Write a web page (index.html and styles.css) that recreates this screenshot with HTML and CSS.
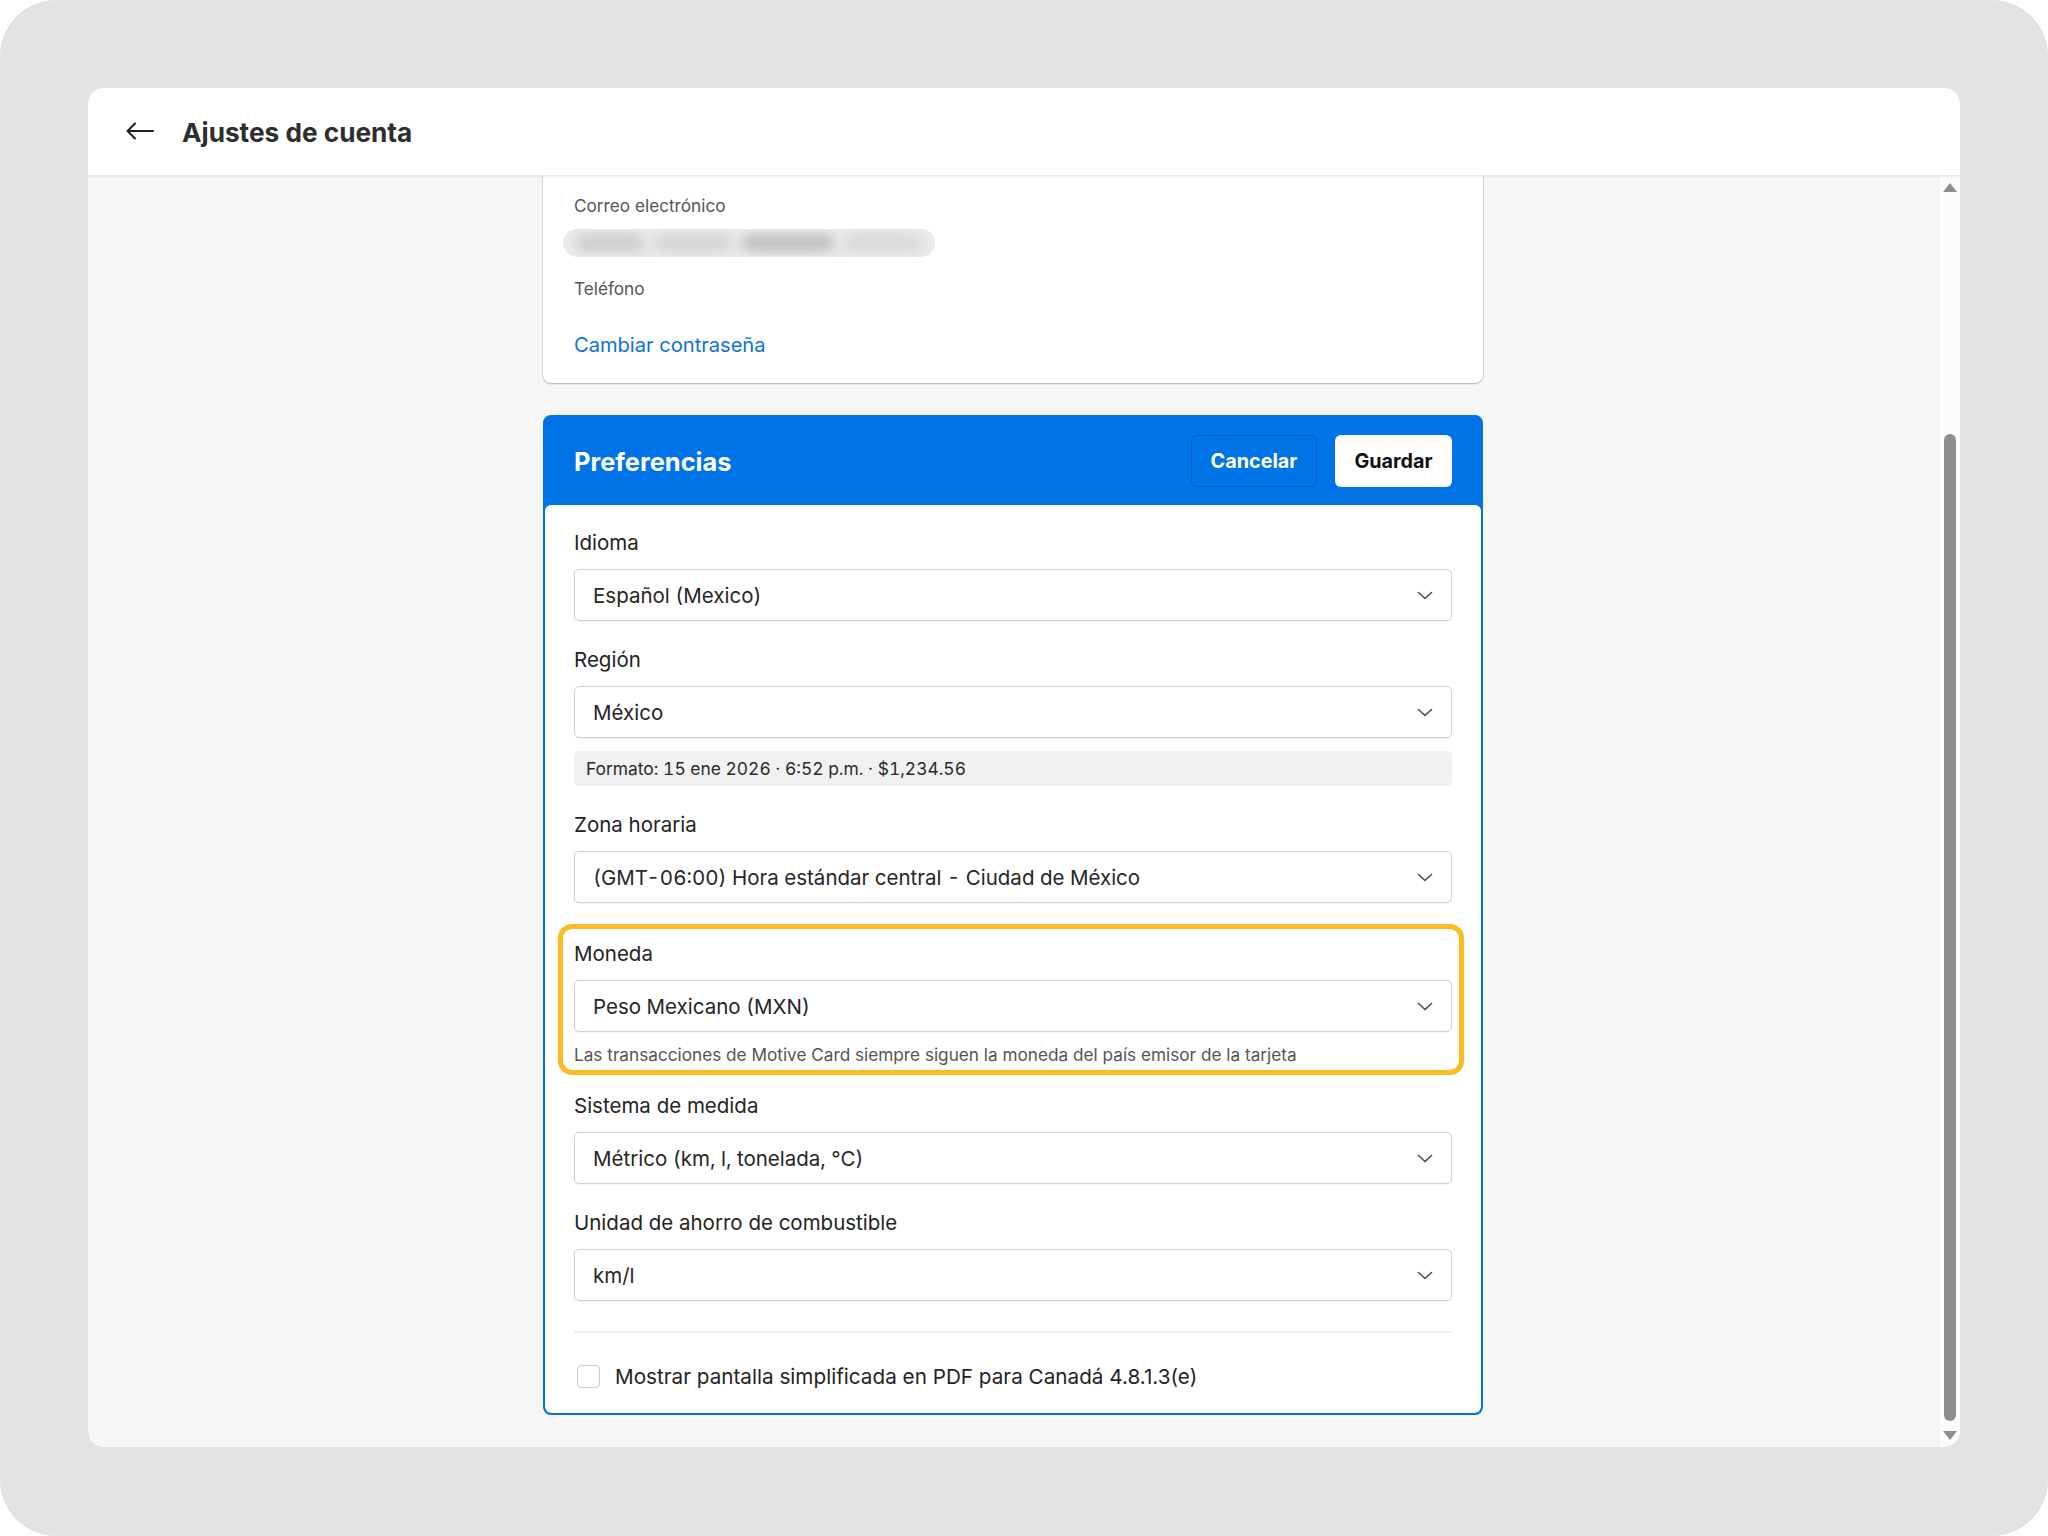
FILE: index.html
```html
<!DOCTYPE html>
<html lang="es">
<head>
<meta charset="utf-8">
<title>Ajustes de cuenta</title>
<link rel="stylesheet" href="styles.css">
</head>
<body>
<div class="screen">
  <div class="window">
    <header class="topbar">
      <svg class="back" width="28" height="18" viewBox="0 0 28 18" fill="none" stroke="#1f1f1f" stroke-width="2" stroke-linecap="round" stroke-linejoin="round">
        <path d="M27 9H2M9 1.5L1.5 9L9 16.5"/>
      </svg>
      <h1 class="title">Ajustes de cuenta</h1>
    </header>
    <div class="content">
      <main class="scroll-area">
        <div class="column">
          <section class="card account">
            <div class="small-label">Correo electrónico</div>
            <div class="redacted">
              <span class="blob b1"></span><span class="blob b2"></span><span class="blob b3"></span><span class="blob b4"></span>
            </div>
            <div class="small-label phone">Teléfono</div>
            <a class="link" href="#">Cambiar contraseña</a>
          </section>

          <section class="card prefs">
            <div class="prefs-head">
              <h2 class="prefs-title">Preferencias</h2>
              <div class="actions">
                <button class="btn btn-ghost">Cancelar</button>
                <button class="btn btn-white">Guardar</button>
              </div>
            </div>
            <div class="prefs-body">
              <div class="field">
                <div class="label">Idioma</div>
                <div class="select"><span>Español (Mexico)</span><svg class="chev" width="16" height="9" viewBox="0 0 16 9" fill="none" stroke="#4a4a4a" stroke-width="1.6" stroke-linecap="round" stroke-linejoin="round"><path d="M1.5 1.5L8 7.5L14.5 1.5"/></svg></div>
              </div>
              <div class="field">
                <div class="label">Región</div>
                <div class="select"><span>México</span><svg class="chev" width="16" height="9" viewBox="0 0 16 9" fill="none" stroke="#4a4a4a" stroke-width="1.6" stroke-linecap="round" stroke-linejoin="round"><path d="M1.5 1.5L8 7.5L14.5 1.5"/></svg></div>
                <div class="format">Formato: 15 ene 2026 · 6:52 p.m. · $1,234.56</div>
              </div>
              <div class="field">
                <div class="label">Zona horaria</div>
                <div class="select"><span>(GMT-06:00) Hora estándar central - Ciudad de México</span><svg class="chev" width="16" height="9" viewBox="0 0 16 9" fill="none" stroke="#4a4a4a" stroke-width="1.6" stroke-linecap="round" stroke-linejoin="round"><path d="M1.5 1.5L8 7.5L14.5 1.5"/></svg></div>
              </div>
              <div class="field highlight">
                <div class="label">Moneda</div>
                <div class="select"><span>Peso Mexicano (MXN)</span><svg class="chev" width="16" height="9" viewBox="0 0 16 9" fill="none" stroke="#4a4a4a" stroke-width="1.6" stroke-linecap="round" stroke-linejoin="round"><path d="M1.5 1.5L8 7.5L14.5 1.5"/></svg></div>
                <div class="help">Las transacciones de Motive Card siempre siguen la moneda del país emisor de la tarjeta</div>
              </div>
              <div class="field after-hl">
                <div class="label">Sistema de medida</div>
                <div class="select"><span>Métrico (km, l, tonelada, °C)</span><svg class="chev" width="16" height="9" viewBox="0 0 16 9" fill="none" stroke="#4a4a4a" stroke-width="1.6" stroke-linecap="round" stroke-linejoin="round"><path d="M1.5 1.5L8 7.5L14.5 1.5"/></svg></div>
              </div>
              <div class="field">
                <div class="label">Unidad de ahorro de combustible</div>
                <div class="select"><span>km/l</span><svg class="chev" width="16" height="9" viewBox="0 0 16 9" fill="none" stroke="#4a4a4a" stroke-width="1.6" stroke-linecap="round" stroke-linejoin="round"><path d="M1.5 1.5L8 7.5L14.5 1.5"/></svg></div>
              </div>
              <hr class="divider">
              <label class="check-row">
                <span class="checkbox"></span>
                <span class="check-text">Mostrar pantalla simplificada en PDF para Canadá 4.8.1.3(e)</span>
              </label>
            </div>
          </section>
        </div>
      </main>
      <div class="scrollbar">
        <span class="arrow-up"></span>
        <span class="thumb"></span>
        <span class="arrow-down"></span>
      </div>
    </div>
  </div>
</div>
</body>
</html>
```

FILE: styles.css
```css
* { box-sizing: border-box; }

html, body {
  margin: 0;
  padding: 0;
  background: #ffffff;
}

body {
  font-family: "Inter", "Noto Sans", "Liberation Sans", sans-serif;
  color: #222;
  overflow: hidden;
}

.screen {
  width: 2048px;
  height: 1536px;
  background: #e2e2e2;
  border-radius: 56px;
  padding: 88px 88px 89px 88px;
}

.window {
  width: 1872px;
  height: 1359px;
  background: #f6f6f6;
  border-radius: 16px;
  overflow: hidden;
  display: flex;
  flex-direction: column;
}

.topbar {
  height: 87px;
  flex: 0 0 87px;
  background: #fff;
  display: flex;
  align-items: center;
  padding-left: 38px;
  padding-top: 2px;
  box-shadow: 0 1px 3px rgba(0, 0, 0, 0.12);
  position: relative;
  z-index: 2;
}

.back { display: block; margin-right: 28px; margin-top: -3px; }

.title {
  margin: 0;
  font-size: 26.2px;
  font-weight: 700;
  color: #2e2e2e;
}

.content {
  flex: 1;
  display: flex;
  min-height: 0;
}

.scroll-area {
  flex: 1;
  overflow: hidden;
  display: flex;
  justify-content: center;
}

.column {
  width: 940px;
}

.card { background: #fff; }

.account {
  border-radius: 0 0 8px 8px;
  box-shadow: 0 1px 2px rgba(0, 0, 0, 0.22), 0 0 0 1px #e4e4e4;
  padding: 20px 31px 25px;
  margin-bottom: 32px;
}

.small-label {
  font-size: 17.2px;
  line-height: 22px;
  color: #555;
}

.redacted {
  width: 372px;
  height: 28px;
  margin: 12px 0 21px -11px;
  border-radius: 14px;
  background: #ebebeb;
  display: flex;
  align-items: center;
  gap: 8px;
  padding: 0 12px;
  overflow: hidden;
}

.blob {
  display: block;
  height: 18px;
  background: #cdcdcd;
  border-radius: 9px;
  filter: blur(6px);
}
.b1 { width: 70px; }
.b2 { width: 80px; background: #d4d4d4; }
.b3 { width: 95px; background: #c2c2c2; }
.b4 { width: 80px; background: #d8d8d8; }

.phone { margin-bottom: 32px; }

.link {
  display: block;
  font-size: 20.1px;
  line-height: 26px;
  color: #0a72e2;
  text-decoration: none;
}

.prefs {
  background: #0074e6;
  border: 2px solid #0074e6;
  border-radius: 8px;
  overflow: hidden;
}

.prefs-head {
  height: 88px;
  display: flex;
  align-items: center;
  justify-content: space-between;
  padding: 0 29px 0 29px;
}

.prefs-title {
  margin: 0;
  color: #fff;
  font-size: 25.4px;
  font-weight: 700;
}

.actions { display: flex; gap: 18px; }

.btn {
  height: 52px;
  border-radius: 6px;
  font-family: inherit;
  font-size: 19.8px;
  font-weight: 700;
  padding: 0;
  cursor: pointer;
}

.btn-ghost {
  width: 126px;
  background: transparent;
  color: #fff;
  border: 1px solid rgba(0, 40, 110, 0.28);
}

.btn-white {
  width: 117px;
  background: #fff;
  color: #111;
  border: none;
}

.prefs-body {
  background: #fff;
  border-radius: 6px;
  padding: 25px 29px 24px;
}

.field + .field { margin-top: 26px; }
.field + .field.highlight { margin-top: 21px; }
.field.highlight + .field { margin-top: 18px; }

.label {
  font-size: 20.5px;
  line-height: 26px;
  color: #242424;
  margin-bottom: 13px;
}

.select {
  height: 52px;
  border: 1px solid #cfcfcf;
  border-radius: 5px;
  display: flex;
  align-items: center;
  justify-content: space-between;
  padding: 0 18px 0 18px;
  font-size: 20.5px;
  color: #262626;
  background: #fff;
  box-shadow: 0 1px 1px rgba(0, 0, 0, 0.04);
  font-variant-numeric: tabular-nums;
}

.chev { flex: 0 0 auto; display: block; }

.format {
  margin-top: 13px;
  height: 35px;
  background: #f1f1f1;
  border-radius: 5px;
  padding-left: 12px;
  display: flex;
  align-items: center;
  font-size: 17.4px;
  color: #2b2b2b;
  font-variant-numeric: tabular-nums;
}

.highlight {
  border: 5px solid #fdbb22;
  border-radius: 14px;
  margin-left: -16px;
  margin-right: -12px;
  padding: 12px 7px 4px 11px;
}

.help {
  margin-top: 12px;
  font-size: 17.2px;
  line-height: 22px;
  color: #555;
}

.divider {
  margin: 30px 0 0;
  border: none;
  border-top: 2px solid #efefef;
  height: 0;
}

.check-row {
  margin-top: 30px;
  display: flex;
  align-items: center;
  height: 26px;
}

.checkbox {
  width: 23px;
  height: 23px;
  border: 1.5px solid #cdcdcd;
  border-radius: 4px;
  margin-left: 3px;
  margin-right: 15px;
  background: #fff;
}

.check-text {
  font-size: 20.7px;
  color: #242424;
}

.scrollbar {
  width: 22px;
  flex: 0 0 22px;
  background: #fbfbfb;
  border-left: 1px solid #f0f0f0;
  display: flex;
  flex-direction: column;
  align-items: center;
  padding-top: 8px;
}

.arrow-up {
  width: 0;
  height: 0;
  border-left: 7px solid transparent;
  border-right: 7px solid transparent;
  border-bottom: 9px solid #8e8e8e;
}

.thumb {
  width: 12px;
  height: 987px;
  border-radius: 6px;
  background: #8e8e8e;
  margin-top: 242px;
}

.arrow-down {
  margin-top: 10px;
  width: 0;
  height: 0;
  border-left: 7px solid transparent;
  border-right: 7px solid transparent;
  border-top: 9px solid #8e8e8e;
}
```
